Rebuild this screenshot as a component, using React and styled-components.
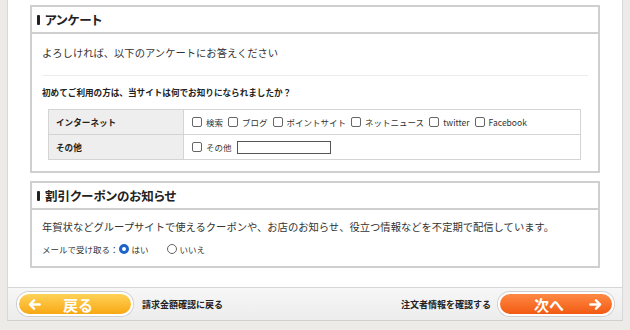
import styled, { createGlobalStyle } from "styled-components"

const GlobalStyle = createGlobalStyle`
  html, body {
    margin: 0;
    padding: 0;
    background: #ecebe8;
  }
  body {
    font-family: "Noto Sans CJK JP", "Noto Sans", sans-serif;
    color: #222;
  }
`

const Page = styled.div`
  width: 630px;
  height: 330px;
  overflow: hidden;
`

const Wrapper = styled.div`
  margin-left: 7px;
  width: 614px;
  background: #fff;
  border-left: 1px solid #d8d8d8;
  border-right: 1px solid #d8d8d8;
  border-bottom: 1px solid #d0d0d0;
  padding-top: 5px;
`

const Section = styled.section`
  margin: 0 0 8px 22px;
  width: 566px;
  border: 2px solid #cfcfcf;
  background: #fff;
`

const SectionHeader = styled.h2`
  margin: 0;
  height: 25px;
  display: flex;
  align-items: center;
  gap: 5px;
  padding-left: 5px;
  border-bottom: 2px solid #cfcfcf;
  font-size: 12.5px;
  font-weight: 700;
  font-feature-settings: "palt";
  color: #222;

  &::before {
    content: "";
    width: 3px;
    height: 10px;
    border-radius: 1px;
    background: #222;
  }
`

const SectionBody = styled.div`
  padding: ${(p) => p.$pad || "10px 10px 12px"};
`

const Lead = styled.p`
  margin: 0;
  font-size: 10.3px;
  line-height: 18px;
  color: #333;
  white-space: nowrap;
`

const Divider = styled.hr`
  margin: 13px 0 0;
  border: 0;
  border-top: 1px solid #ececec;
`

const Question = styled.p`
  margin: 9px 0 10px;
  font-size: 8.6px;
  font-weight: 700;
  line-height: 14px;
  color: #222;
`

const Table = styled.table`
  margin: 0 7px 0 6px;
  width: 533px;
  border-collapse: collapse;
  font-size: 9px;
`

const Th = styled.th`
  width: 127px;
  height: 24px;
  padding: 0 0 0 7px;
  text-align: left;
  font-weight: 700;
  font-size: 8.6px;
  background: #eeeeee;
  border: 1px solid #d4d4d4;
  color: #222;
`

const Td = styled.td`
  padding: 0 8px;
  border: 1px solid #d4d4d4;
  color: #333;
`

const Options = styled.div`
  display: flex;
  align-items: center;
  gap: 5px;
`

const Option = styled.label`
  display: inline-flex;
  align-items: center;
  gap: 4px;
  font-size: 8.5px;
  color: #333;
  white-space: nowrap;
`

const Check = styled.span`
  width: 8px;
  height: 8px;
  border: 1px solid #666;
  border-radius: 2px;
  background: #fff;
`

const TextInput = styled.span`
  width: 92px;
  height: 11px;
  border: 1px solid #555;
  background: #fff;
`

const RadioRow = styled.div`
  margin-top: 7px;
  height: 12px;
  display: flex;
  align-items: center;
  font-size: 8.5px;
  color: #333;
`

const Radio = styled.span`
  display: inline-flex;
  align-items: center;
  gap: 3px;
  margin-right: 18px;

  &::before {
    content: "";
    box-sizing: border-box;
    width: 10px;
    height: 10px;
    border-radius: 50%;
    border: ${(p) => (p.$on ? "3px solid #1f63c8" : "1px solid #666")};
    background: #fff;
  }
`

const Footer = styled.div`
  margin-top: 19px;
  height: 32px;
  display: flex;
  align-items: center;
  padding: 0 8px 0 9px;
  border-top: 1px solid #d6d6d6;
  background: linear-gradient(#f7f7f7, #ececec);
`

const NavButton = styled.button`
  box-sizing: border-box;
  width: 116px;
  height: 24px;
  display: flex;
  align-items: center;
  justify-content: ${(p) => (p.$next ? "space-between" : "flex-start")};
  gap: 22px;
  padding: ${(p) => (p.$next ? "0 10px 0 34px" : "0 10px 0 9px")};
  border: 2px solid #fff;
  border-radius: 12px;
  box-shadow: 0 0 0 1px #cfcfcf;
  background: ${(p) =>
    p.$next
      ? "linear-gradient(#ff8a45, #f25a12)"
      : "linear-gradient(#ffd257, #f8a814)"};
  color: #fff;
  font-family: "Noto Sans CJK JP", sans-serif;
  font-size: 15px;
  font-weight: 700;
  line-height: 1;
  cursor: pointer;

  svg {
    width: 13px;
    height: 13px;
  }
`

const NavLabel = styled.span`
  font-size: 9px;
  font-weight: 700;
  color: #222;
  margin: ${(p) => (p.$right ? "0 7px 0 auto" : "0 0 0 9px")};
`

const Arrow = ({ dir }) => (
  <svg viewBox="0 0 14 14" fill="none" stroke="#fff" strokeWidth="2.6" strokeLinecap="round" strokeLinejoin="round">
    {dir === "left" ? (
      <>
        <path d="M12.5 7H2.5" />
        <path d="M6.5 2.5L2 7l4.5 4.5" />
      </>
    ) : (
      <>
        <path d="M1.5 7h10" />
        <path d="M7.5 2.5L12 7l-4.5 4.5" />
      </>
    )}
  </svg>
)

const internetOptions = ["検索", "ブログ", "ポイントサイト", "ネットニュース", "twitter", "Facebook"]

export default function App() {
  return (
    <Page>
      <GlobalStyle />
      <Wrapper>
        <Section>
          <SectionHeader>アンケート</SectionHeader>
          <SectionBody $pad="10px 10px 11px">
            <Lead>よろしければ、以下のアンケートにお答えください</Lead>
            <Divider />
            <Question>初めてご利用の方は、当サイトは何でお知りになられましたか？</Question>
            <Table>
              <tbody>
                <tr>
                  <Th>インターネット</Th>
                  <Td>
                    <Options>
                      {internetOptions.map((o) => (
                        <Option key={o}>
                          <Check />
                          {o}
                        </Option>
                      ))}
                    </Options>
                  </Td>
                </tr>
                <tr>
                  <Th>その他</Th>
                  <Td>
                    <Options>
                      <Option>
                        <Check />
                        その他
                      </Option>
                      <TextInput />
                    </Options>
                  </Td>
                </tr>
              </tbody>
            </Table>
          </SectionBody>
        </Section>

        <Section>
          <SectionHeader>割引クーポンのお知らせ</SectionHeader>
          <SectionBody $pad="8px 10px 11px">
            <Lead>年賀状などグループサイトで使えるクーポンや、お店のお知らせ、役立つ情報などを不定期で配信しています。</Lead>
            <RadioRow>
              メールで受け取る：
              <Radio $on>はい</Radio>
              <Radio>いいえ</Radio>
            </RadioRow>
          </SectionBody>
        </Section>

        <Footer>
          <NavButton>
            <Arrow dir="left" />
            戻る
          </NavButton>
          <NavLabel>請求金額確認に戻る</NavLabel>
          <NavLabel $right>注文者情報を確認する</NavLabel>
          <NavButton $next>
            次へ
            <Arrow dir="right" />
          </NavButton>
        </Footer>
      </Wrapper>
    </Page>
  )
}
